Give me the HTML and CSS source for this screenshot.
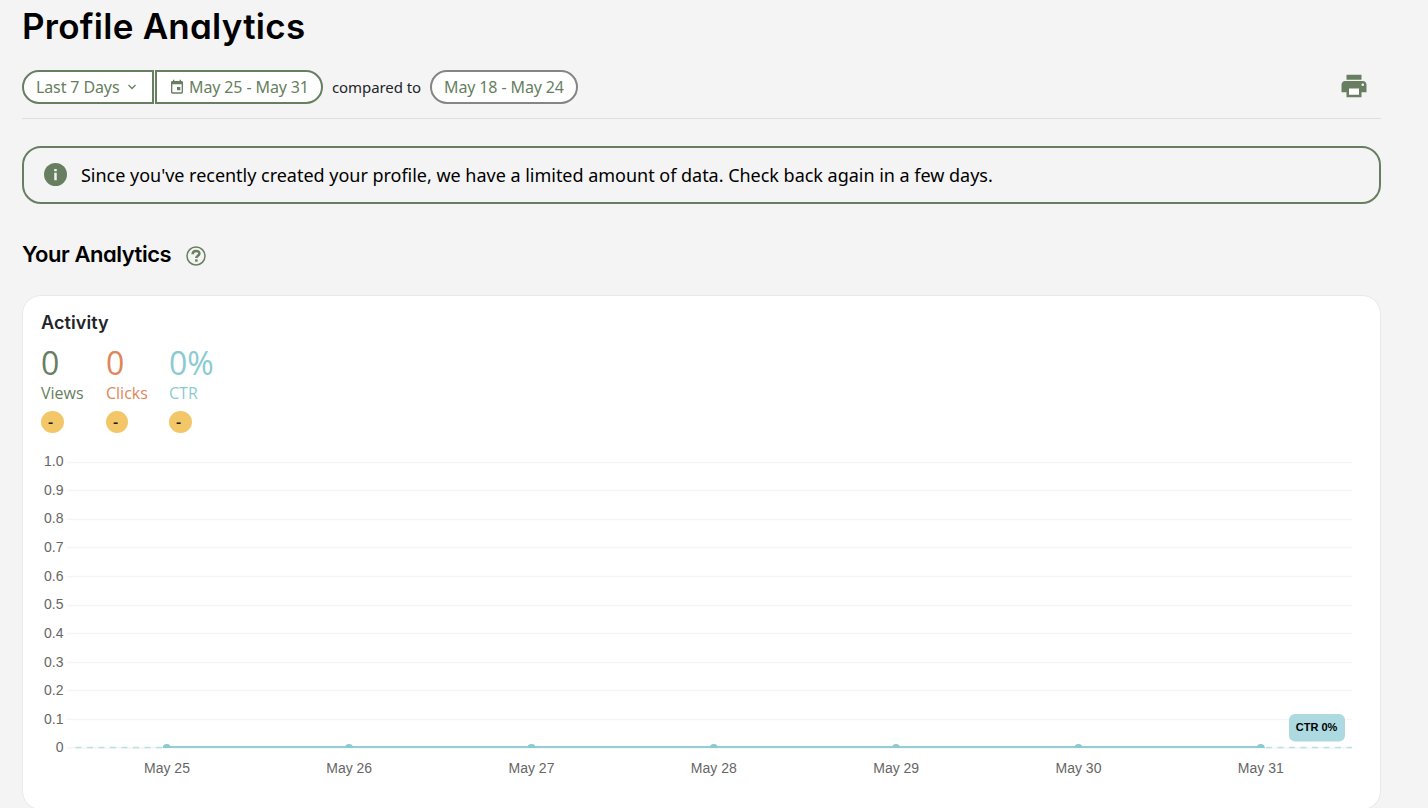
FILE: index.html
```html
<!DOCTYPE html>
<html lang="en">
<head>
<meta charset="utf-8">
<title>Profile Analytics</title>
<link rel="stylesheet" href="styles.css">
</head>
<body>
<main class="page">
  <h1 class="title">Profile Analytics</h1>
  <div class="toolbar">
    <button class="pill pill-left">Last 7 Days
      <svg class="chevron" viewBox="0 0 10 8"><path d="M1.500 2l3.500 3.500L8.500 2" fill="none" stroke="currentColor" stroke-width="1.300"/></svg>
    </button>
    <button class="pill pill-right">
      <svg class="calendar" viewBox="0 0 24 24"><path fill="currentColor" d="M17 12h-5v5h5v-5zM16 1v2H8V1H6v2H5c-1.110 0-2 .9-2 2v15c0 1.100.89 2 2 2h14c1.100 0 2-.9 2-2V5c0-1.100-.9-2-2-2h-1V1h-2zm3 19H5V8h14v12z"/></svg>May 25 - May 31
    </button>
    <span class="compared">compared to</span>
    <button class="pill pill-compare">May 18 - May 24</button>
    <svg class="print" viewBox="0 0 24 24"><path d="M7 13h10v7H7z" fill="#fff"/><path fill="currentColor" d="M19 8H5c-1.660 0-3 1.340-3 3v6h4v4h12v-4h4v-6c0-1.660-1.340-3-3-3zm-3 11H8v-5h8v5zm3-7c-.55 0-1-.45-1-1s.45-1 1-1 1 .45 1 1-.45 1-1 1zM18 3H6v4h12V3z"/></svg>
  </div>
  <section class="notice">
    <svg class="info" viewBox="0 0 24 24"><circle cx="12" cy="12" r="12" fill="#677f60"/><path d="M10.700 6.200h2.600v2.500h-2.600zM10.700 10.300h2.600v7.700h-2.600z" fill="#f3f3f3"/></svg>
    <span class="notice-text">Since you've recently created your profile, we have a limited amount of data. Check back again in a few days.</span>
  </section>
  <div class="section-head">
    <h2 class="subtitle">Your Analytics</h2>
    <svg class="help" viewBox="0 0 20 20"><circle cx="10" cy="10" r="9" fill="none" stroke="currentColor" stroke-width="1.500"/><path d="M6.600 8.200c0-4.400 6.800-4.200 6.800-.7 0 2.200-3.100 2.200-3.100 4.600" fill="none" stroke="currentColor" stroke-width="2.500"/><path d="M9.100 13.300h2.500v2.400H9.100z" fill="currentColor"/></svg>
  </div>
  <section class="card">
    <h3 class="card-title">Activity</h3>
    <div class="stats">
      <div class="stat views"><span class="value">0</span><span class="label">Views</span><span class="badge">-</span></div>
      <div class="stat clicks"><span class="value">0</span><span class="label">Clicks</span><span class="badge">-</span></div>
      <div class="stat ctr"><span class="value">0%</span><span class="label">CTR</span><span class="badge">-</span></div>
    </div>
    <svg class="chart" viewBox="41 448 1320 340">
      <path class="grid" d="M67 462.500H1352M67 490.500H1352M67 519.500H1352M67 547.500H1352M67 576.500H1352M67 605.500H1352M67 633.500H1352M67 662.500H1352M67 690.500H1352M67 719.500H1352M67 748H1352"/>
      <g class="axis axis-y">
        <text x="63.500" y="466">1.0</text><text x="63.500" y="495">0.9</text><text x="63.500" y="523">0.8</text><text x="63.500" y="552">0.7</text><text x="63.500" y="581">0.6</text><text x="63.500" y="609">0.5</text><text x="63.500" y="638">0.4</text><text x="63.500" y="667">0.3</text><text x="63.500" y="695">0.2</text><text x="63.500" y="724">0.1</text><text x="63.500" y="752">0</text>
      </g>
      <path class="trend" d="M75.500 747.500H162M1266 747.500H1352"/>
      <path class="line" d="M167 747H1261"/>
      <g class="dots">
        <path d="M162.700 748a4 4 0 0 1 8 0zM345 748a4 4 0 0 1 8 0zM527.500 748a4 4 0 0 1 8 0zM709.800 748a4 4 0 0 1 8 0zM892 748a4 4 0 0 1 8 0zM1074.500 748a4 4 0 0 1 8 0zM1256.800 748a4 4 0 0 1 8 0z"/>
      </g>
      <g class="axis axis-x">
        <text x="167" y="773">May 25</text><text x="349.200" y="773">May 26</text><text x="531.500" y="773">May 27</text><text x="713.800" y="773">May 28</text><text x="896.200" y="773">May 29</text><text x="1078.500" y="773">May 30</text><text x="1260.800" y="773">May 31</text>
      </g>
      <rect x="1289" y="714" width="56" height="27.500" rx="6" fill="#addae1"/>
      <text class="tag" x="1316.500" y="731">CTR 0%</text>
    </svg>
  </section>
</main>
</body>
</html>
```

FILE: styles.css
```css
* { box-sizing: border-box; }
body { margin: 0; background: #f4f4f4; color: #000; font-family: "Noto Sans", sans-serif; overflow: hidden; }
.page { height: 808px; padding: 0 47px 0 22px; overflow: hidden; }
h1, h2, h3 { margin: 0; font-family: Inter, sans-serif; font-feature-settings: "cv11"; white-space: nowrap; }
.title { height: 70px; line-height: 53px; font-size: 35px; font-weight: 640; letter-spacing: 0.25px; }
.toolbar { display: flex; align-items: flex-start; height: 49px; border-bottom: 1px solid #dedede; }
.pill { display: flex; align-items: center; height: 34px; padding: 0 12px; border: 2px solid #677f60; background: #fff; color: #677f60; font-family: "Noto Sans", sans-serif; font-size: 16px; letter-spacing: -0.12px; white-space: nowrap; }
.pill-left { width: 132px; border-radius: 17px 0 0 17px; }
.pill-right { width: 168px; margin-left: 1px; border-radius: 0 17px 17px 0; }
.pill-compare { width: 148px; margin-left: 9px; border-color: #858585; border-radius: 17px; }
.chevron { width: 10px; height: 8px; margin-left: 8px; }
.calendar { width: 16px; height: 16px; margin-right: 4px; flex: none; }
.compared { width: 89px; margin-left: 9px; font-size: 15px; letter-spacing: -0.08px; line-height: 34px; color: #212529; white-space: nowrap; }
.print { width: 30px; height: 30px; margin: 1px 12px 0 auto; color: #677f60; }
.notice { display: flex; align-items: center; height: 58px; margin-top: 27px; padding: 0 20px; border: 2px solid #677f60; border-radius: 19px; }
.info { width: 23px; height: 23px; margin: 0 14px 1px 0; }
.notice-text { font-size: 18px; letter-spacing: -0.02px; white-space: nowrap; }
.section-head { display: flex; align-items: center; height: 91px; }
.subtitle { width: 149px; padding: 15px 0 7px; font-size: 22px; line-height: 22px; font-weight: 620; letter-spacing: -0.45px; }
.help { width: 20px; height: 20px; margin: 13px 0 0 15px; color: #677f60; }
.card { height: 515px; padding: 16px 18px; border: 1px solid #e9e9e9; border-radius: 19px; background: #fff; }
.card-title { height: 32px; line-height: 22px; font-size: 18px; font-weight: 600; letter-spacing: 0.1px; color: #212529; }
.stats { display: grid; grid-template-columns: 65px 63px 60px; height: 104px; }
.stat { display: flex; flex-direction: column; font-family: "Open Sans", sans-serif; }
.value { height: 38px; line-height: 37px; font-size: 32px; font-weight: 370; }
.label { height: 29px; line-height: 22px; font-size: 16px; }
.badge { width: 23px; height: 22px; padding-left: 7px; border-radius: 50%; background: #f3c667; color: #222; font-size: 16px; font-weight: 600; line-height: 22px; }
.clicks .badge { width: 22px; }
.views { color: #677f60; }
.clicks { color: #df8659; }
.ctr { color: #8acbd2; }
.chart { display: block; width: 1320px; height: 340px; overflow: visible; }
.grid { fill: none; stroke: #f5f5f5; stroke-width: 1.5; }
.axis { font-family: "Liberation Sans", Arial, sans-serif; font-size: 14px; fill: #666; }
.axis-y { text-anchor: end; }
.axis-x { text-anchor: middle; }
.trend { fill: none; stroke: #b8e2e1; stroke-width: 1.5; stroke-dasharray: 6 5.5; }
.line { fill: none; stroke: #93cdd5; stroke-width: 2; }
.dots { fill: #8acbd0; }
.tag { font-family: "Liberation Sans", Arial, sans-serif; font-size: 11px; font-weight: 700; fill: #000; text-anchor: middle; }
```
